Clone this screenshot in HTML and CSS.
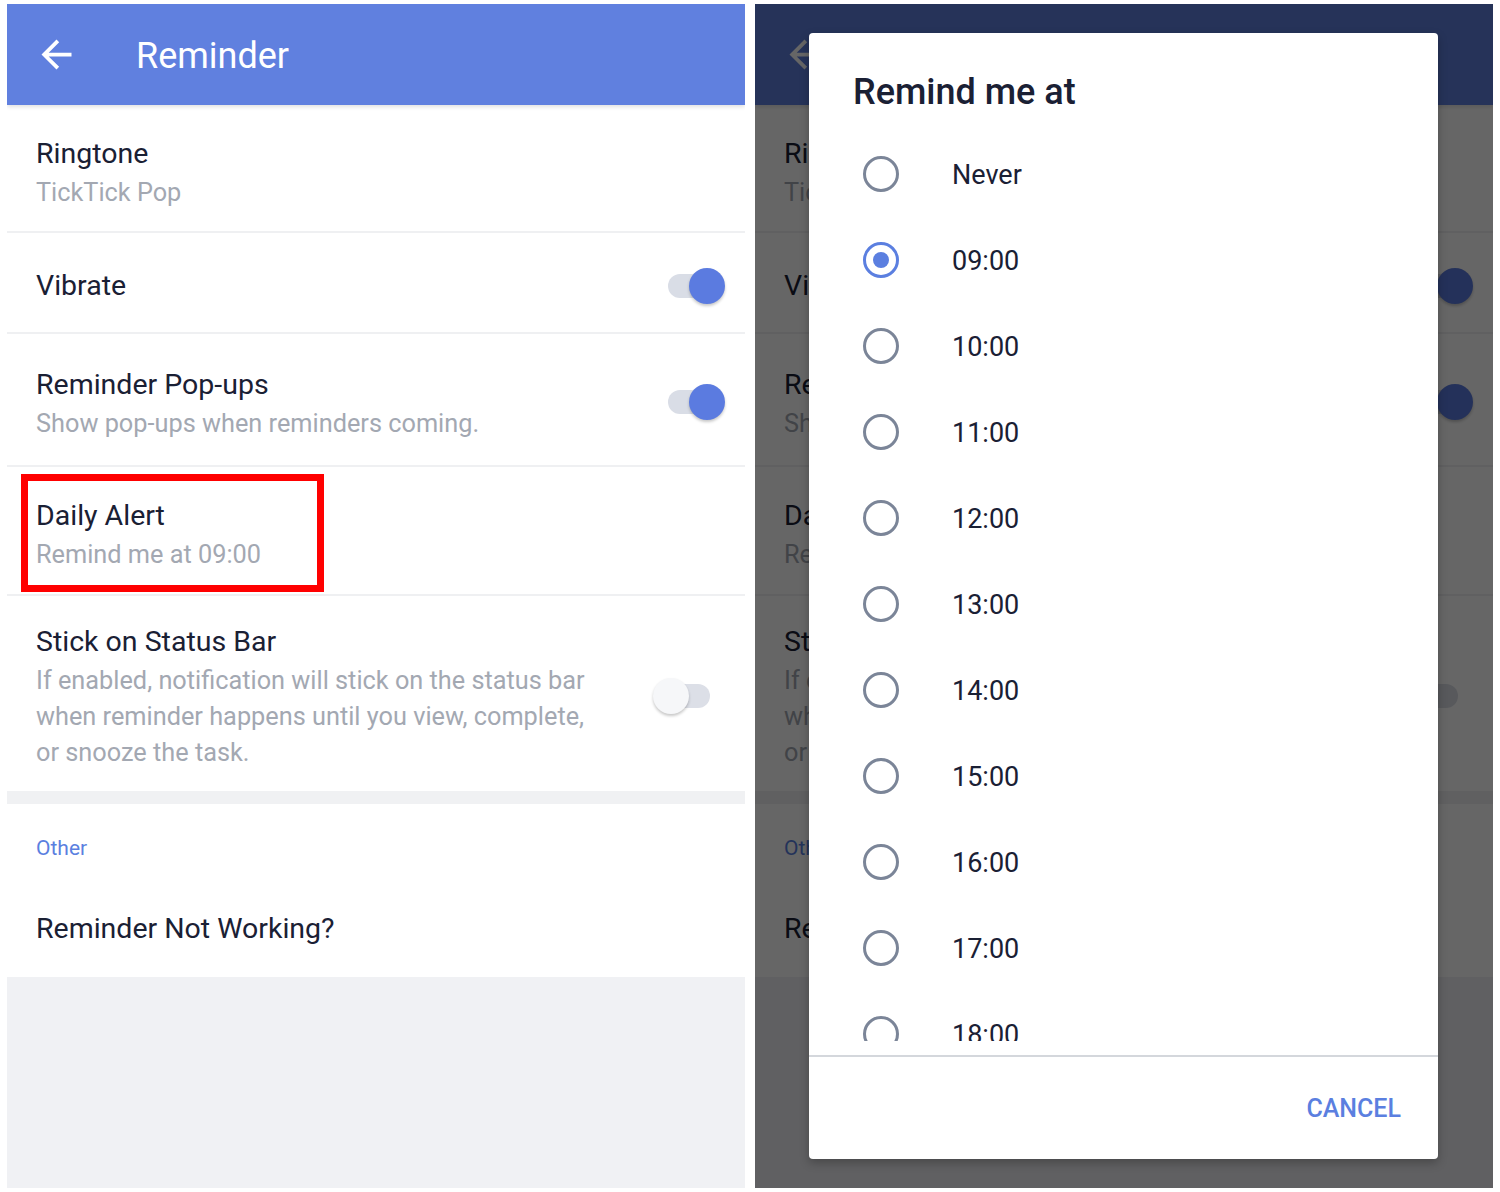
FILE: index.html
```html
<!DOCTYPE html>
<html lang="en">
<head>
<meta charset="utf-8">
<title>Reminder</title>
<link rel="stylesheet" href="styles.css">
</head>
<body>
<div class="screens">
  <section class="phone">
    <header class="appbar">
      <svg class="back" viewBox="0 0 24 24" width="45" height="45"><path d="M20 11H7.83l5.59-5.59L12 4l-8 8 8 8 1.41-1.41L7.83 13H20v-2z" fill="#fff"/></svg>
      <h1 class="appbar-title">Reminder</h1>
    </header>
    <div class="row row-ringtone">
      <div class="row-text">
        <div class="row-title">Ringtone</div>
        <div class="row-sub">TickTick Pop</div>
      </div>
    </div>
    <div class="row row-vibrate">
      <div class="row-text">
        <div class="row-title">Vibrate</div>
      </div>
      <div class="toggle on"><span class="track"></span><span class="thumb"></span></div>
    </div>
    <div class="row row-popups">
      <div class="row-text">
        <div class="row-title">Reminder Pop-ups</div>
        <div class="row-sub">Show pop-ups when reminders coming.</div>
      </div>
      <div class="toggle on"><span class="track"></span><span class="thumb"></span></div>
    </div>
    <div class="row row-daily">
      <div class="row-text">
        <div class="row-title">Daily Alert</div>
        <div class="row-sub">Remind me at 09:00</div>
      </div>
      <div class="highlight"></div>
    </div>
    <div class="row row-stick">
      <div class="row-text">
        <div class="row-title">Stick on Status Bar</div>
        <div class="row-sub wrap">If enabled, notification will stick on the status bar when reminder happens until you view, complete, or snooze the task.</div>
      </div>
      <div class="toggle off"><span class="track"></span><span class="thumb"></span></div>
    </div>
    <div class="band"></div>
    <div class="section">
      <div class="section-label">Other</div>
      <div class="row row-last">
        <div class="row-text">
          <div class="row-title">Reminder Not Working?</div>
        </div>
      </div>
    </div>
  </section>

  <section class="phone">
    <header class="appbar">
      <svg class="back" viewBox="0 0 24 24" width="45" height="45"><path d="M20 11H7.83l5.59-5.59L12 4l-8 8 8 8 1.41-1.41L7.83 13H20v-2z" fill="#fff"/></svg>
      <h1 class="appbar-title">Reminder</h1>
    </header>
    <div class="row row-ringtone">
      <div class="row-text">
        <div class="row-title">Ringtone</div>
        <div class="row-sub">TickTick Pop</div>
      </div>
    </div>
    <div class="row row-vibrate">
      <div class="row-text">
        <div class="row-title">Vibrate</div>
      </div>
      <div class="toggle on"><span class="track"></span><span class="thumb"></span></div>
    </div>
    <div class="row row-popups">
      <div class="row-text">
        <div class="row-title">Reminder Pop-ups</div>
        <div class="row-sub">Show pop-ups when reminders coming.</div>
      </div>
      <div class="toggle on"><span class="track"></span><span class="thumb"></span></div>
    </div>
    <div class="row row-daily">
      <div class="row-text">
        <div class="row-title">Daily Alert</div>
        <div class="row-sub">Remind me at 09:00</div>
      </div>
    </div>
    <div class="row row-stick">
      <div class="row-text">
        <div class="row-title">Stick on Status Bar</div>
        <div class="row-sub wrap">If enabled, notification will stick on the status bar when reminder happens until you view, complete, or snooze the task.</div>
      </div>
      <div class="toggle off"><span class="track"></span><span class="thumb"></span></div>
    </div>
    <div class="band"></div>
    <div class="section">
      <div class="section-label">Other</div>
      <div class="row row-last">
        <div class="row-text">
          <div class="row-title">Reminder Not Working?</div>
        </div>
      </div>
    </div>

    <div class="scrim"></div>
    <div class="dialog">
      <h2 class="dialog-title">Remind me at</h2>
      <div class="options">
        <div class="option"><span class="radio"></span><span class="option-label">Never</span></div>
        <div class="option"><span class="radio checked"></span><span class="option-label">09:00</span></div>
        <div class="option"><span class="radio"></span><span class="option-label">10:00</span></div>
        <div class="option"><span class="radio"></span><span class="option-label">11:00</span></div>
        <div class="option"><span class="radio"></span><span class="option-label">12:00</span></div>
        <div class="option"><span class="radio"></span><span class="option-label">13:00</span></div>
        <div class="option"><span class="radio"></span><span class="option-label">14:00</span></div>
        <div class="option"><span class="radio"></span><span class="option-label">15:00</span></div>
        <div class="option"><span class="radio"></span><span class="option-label">16:00</span></div>
        <div class="option"><span class="radio"></span><span class="option-label">17:00</span></div>
        <div class="option"><span class="radio"></span><span class="option-label">18:00</span></div>
      </div>
      <div class="dialog-divider"></div>
      <div class="dialog-actions">
        <span class="btn-text">CANCEL</span>
      </div>
    </div>
  </section>
</div>
</body>
</html>
```

FILE: styles.css
```css
* { box-sizing: border-box; }

html, body {
  margin: 0;
  padding: 0;
  background: #ffffff;
}

body {
  font-family: Roboto, "Liberation Sans", Arial, sans-serif;
  color: #1a2034;
}

.screens {
  display: flex;
  gap: 10px;
  padding: 4px 0 0 7px;
}

.phone {
  position: relative;
  width: 738px;
  height: 1184px;
  overflow: hidden;
  background: #f0f1f4;
  display: flex;
  flex-direction: column;
}

.appbar {
  position: relative;
  z-index: 1;
  flex: 0 0 101px;
  height: 101px;
  background: #6080df;
  display: flex;
  align-items: center;
  padding-left: 27px;
  box-shadow: 0 2px 4px rgba(0, 0, 0, 0.12);
}

.back {
  display: block;
  flex: 0 0 auto;
}

.appbar-title {
  margin: 2px 0 0 57px;
  font-size: 36px;
  font-weight: 400;
  line-height: 40px;
  color: #ffffff;
}

.row {
  position: relative;
  background: #ffffff;
  display: flex;
  align-items: center;
  padding: 0 20px 0 29px;
  border-bottom: 2px solid #eff0f2;
}

.row-text {
  flex: 1 1 auto;
  min-width: 0;
}

.row-title {
  font-size: 28.5px;
  line-height: 36px;
  color: #1a2034;
}

.row-sub {
  margin-top: 3px;
  font-size: 25.3px;
  line-height: 36px;
  color: #a3a8b2;
}

.row-sub.wrap {
  max-width: 572px;
}

.row-ringtone { padding-top: 31px; padding-bottom: 20px; }
.row-vibrate { padding-top: 35px; padding-bottom: 28px; }
.row-popups { padding-top: 33px; padding-bottom: 23px; }
.row-daily { padding-top: 31px; padding-bottom: 21px; }
.row-stick { padding-top: 28px; padding-bottom: 20px; border-bottom: none; }
.row-popups .toggle { margin-top: -6px; }

.toggle {
  position: relative;
  flex: 0 0 57px;
  width: 57px;
  height: 36px;
}

.toggle .track {
  position: absolute;
  top: 6px;
  height: 24px;
  border-radius: 12px;
}

.toggle .thumb {
  position: absolute;
  top: 0;
  width: 36px;
  height: 36px;
  border-radius: 50%;
  box-shadow: 0 2px 3px rgba(0, 0, 0, 0.22);
}

.toggle.on .track {
  left: 0;
  width: 48px;
  background: #d9dde6;
}

.toggle.on .thumb {
  right: 0;
  background: #5b7be0;
}

.toggle.off {
  margin-right: 15px;
  margin-top: -4px;
}

.toggle.off .track {
  left: 10px;
  width: 47px;
  background: #dcdfe7;
}

.toggle.off .thumb {
  left: 0;
  background: #f6f7f9;
}

.highlight {
  position: absolute;
  left: 14px;
  top: 7px;
  width: 303px;
  height: 118px;
  border: 7px solid #ff0000;
}

.band {
  flex: 0 0 13px;
  height: 13px;
  background: #f0f1f3;
}

.section {
  background: #ffffff;
  padding-top: 29px;
}

.section-label {
  padding-left: 29px;
  font-size: 21px;
  line-height: 30px;
  color: #5b7fe0;
}

.row-last {
  padding-top: 48px;
  padding-bottom: 30px;
  border-bottom: none;
}

.scrim {
  position: absolute;
  inset: 0;
  z-index: 2;
  background: rgba(0, 0, 0, 0.6);
}

.dialog {
  position: absolute;
  z-index: 3;
  left: 54px;
  top: 29px;
  width: 629px;
  height: 1126px;
  background: #ffffff;
  border-radius: 4px;
  box-shadow: 0 4px 10px rgba(0, 0, 0, 0.25);
  display: flex;
  flex-direction: column;
}

.dialog-title {
  margin: 0;
  padding: 39px 44px 19px;
  font-size: 36px;
  font-weight: 500;
  line-height: 40px;
  color: #1a2034;
}

.options {
  flex: 0 0 910px;
  height: 910px;
  overflow: hidden;
}

.option {
  height: 86px;
  display: flex;
  align-items: center;
  padding-left: 54px;
}

.radio {
  position: relative;
  flex: 0 0 36px;
  width: 36px;
  height: 36px;
  border: 3px solid #7b8598;
  border-radius: 50%;
}

.radio.checked {
  border-color: #5b7fe0;
}

.radio.checked::after {
  content: "";
  position: absolute;
  left: 7px;
  top: 7px;
  width: 16px;
  height: 16px;
  border-radius: 50%;
  background: #5b7fe0;
}

.option-label {
  margin-left: 53px;
  margin-top: 2px;
  font-size: 27px;
  line-height: 36px;
  color: #1a2034;
}

.dialog-divider {
  flex: 0 0 2px;
  height: 2px;
  margin-top: 14px;
  background: #d4d7dc;
}

.dialog-actions {
  flex: 1 1 auto;
  display: flex;
  align-items: center;
  justify-content: flex-end;
  padding-right: 37px;
}

.btn-text {
  margin-top: 2px;
  font-size: 25px;
  font-weight: 500;
  line-height: 36px;
  color: #5b7fe0;
}
```
